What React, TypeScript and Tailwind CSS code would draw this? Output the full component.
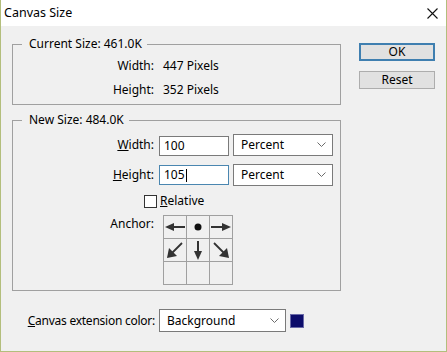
import React from "react";

const Chevron = () => (
  <svg width="9" height="6" viewBox="0 0 9 6" className="shrink-0">
    <polyline points="0.5,0.5 4.5,4.5 8.5,0.5" fill="none" stroke="#6b6b6b" strokeWidth="1" />
  </svg>
);

const Select = ({ value, className }: { value: string; className: string }) => (
  <div
    className={`flex items-center justify-between bg-white border border-[#7a7a7a] pl-[7px] pr-[6px] ${className}`}
  >
    <span>{value}</span>
    <Chevron />
  </div>
);

// anchor arrows, 22x22 drawing area per cell
const arrows: Record<string, React.ReactNode> = {
  left: (
    <>
      <line x1="21" y1="11" x2="8" y2="11" stroke="#333" strokeWidth="2" />
      <polygon points="1,11 10,7 10,15" fill="#333" />
    </>
  ),
  right: (
    <>
      <line x1="1" y1="11" x2="14" y2="11" stroke="#333" strokeWidth="2" />
      <polygon points="21,11 12,7 12,15" fill="#333" />
    </>
  ),
  dot: <circle cx="11" cy="11" r="3.5" fill="#111" />,
  down: (
    <>
      <line x1="11" y1="2" x2="11" y2="14" stroke="#333" strokeWidth="2" />
      <polygon points="11,21 7,12 15,12" fill="#333" />
    </>
  ),
  downLeft: (
    <>
      <line x1="18" y1="4" x2="8" y2="14" stroke="#333" strokeWidth="1.8" />
      <polygon points="3,19 5,9 13,17" fill="#333" />
    </>
  ),
  downRight: (
    <>
      <line x1="4" y1="4" x2="14" y2="14" stroke="#333" strokeWidth="1.8" />
      <polygon points="19,19 9,17 17,9" fill="#333" />
    </>
  ),
};

const anchorCells = ["left", "dot", "right", "downLeft", "down", "downRight", "", "", ""];

export default function App() {
  return (
    <div className="w-[447px] h-[352px] bg-[#f0f0f0] border-x border-b border-[#b3be7c] flex flex-col font-['Noto_Sans',sans-serif] text-[12px] leading-[16px] text-black">
      {/* Title bar */}
      <div className="h-[26px] bg-white flex items-center justify-between pl-[3px] pr-[8px] shrink-0">
        <span className="text-[12.5px]">Canvas Size</span>
        <svg width="11" height="11" viewBox="0 0 11 11">
          <path d="M0.5 0.5 L10.5 10.5 M10.5 0.5 L0.5 10.5" stroke="#111" strokeWidth="1.1" />
        </svg>
      </div>

      <div className="flex pl-[11px]">
        {/* Left column */}
        <div className="w-[329px] flex flex-col">
          {/* Current size */}
          <fieldset className="mt-[10px] h-[69px] border border-[#a0a0a0]">
            <legend className="ml-[9px] pl-[7px] pr-[5px]">Current Size: 461.0K</legend>
            <div className="grid grid-cols-[141px_auto] gap-x-[9px] gap-y-[8px] pt-[6px]">
              <span className="text-right">Width:</span>
              <span>447 Pixels</span>
              <span className="text-right">Height:</span>
              <span>352 Pixels</span>
            </div>
          </fieldset>

          {/* New size */}
          <fieldset className="mt-[7px] h-[179px] border border-[#a0a0a0]">
            <legend className="ml-[9px] pl-[7px] pr-[5px]">New Size: 484.0K</legend>
            <div className="flex flex-col pt-[6px]">
              <div className="flex items-center h-[22px]">
                <span className="w-[141px] text-right">
                  <span className="underline">W</span>idth:
                </span>
                <div className="ml-[5px] w-[70px] h-[20px] mt-[2px] bg-white border border-[#7a7a7a] pl-[4px] flex items-center">
                  100
                </div>
                <Select value="Percent" className="ml-[4px] w-[100px] h-[22px]" />
              </div>
              <div className="flex items-center h-[22px] mt-[8px]">
                <span className="w-[141px] text-right">
                  <span className="underline">H</span>eight:
                </span>
                <div className="ml-[5px] w-[70px] h-[20px] bg-white border border-[#4a86b0] pl-[4px] flex items-center">
                  105<span className="inline-block w-px h-[13px] bg-black ml-px" />
                </div>
                <Select value="Percent" className="ml-[4px] w-[100px] h-[22px]" />
              </div>
              <div className="flex items-center h-[16px] mt-[7px] pl-[131px]">
                <span className="w-[13px] h-[13px] bg-white border border-[#333]" />
                <span className="ml-[3px]">
                  <span className="underline">R</span>elative
                </span>
              </div>
              <div className="flex items-start mt-[6px]">
                <span className="w-[141px] text-right pt-[1px]">Anchor:</span>
                <div className="ml-[9px] grid grid-cols-[repeat(3,23px)] border-l border-t border-[#a0a0a0]">
                  {anchorCells.map((a, i) => (
                    <div key={i} className="w-[23px] h-[23px] border-r border-b border-[#a0a0a0] flex items-center justify-center">
                      {a && (
                        <svg width="22" height="22" viewBox="0 0 22 22">
                          {arrows[a]}
                        </svg>
                      )}
                    </div>
                  ))}
                </div>
              </div>
            </div>
          </fieldset>

          {/* Canvas extension color */}
          <div className="flex items-center mt-[18px]">
            <span className="w-[143px] text-right tracking-[-0.25px]">
              <span className="underline">C</span>anvas extension color:
            </span>
            <Select value="Background" className="ml-[4px] w-[127px] h-[23px]" />
            <div className="ml-[4px] w-[14px] h-[14px] bg-[#0d0d6b] border border-[#6a6aa8]" />
          </div>
        </div>

        {/* Buttons */}
        <div className="ml-[18px] pt-[17px] flex flex-col gap-[10px]">
          <button className="w-[76px] h-[18px] bg-[#e1e1e1] border-2 border-[#3f7fb0] flex items-center justify-center leading-none">
            OK
          </button>
          <button className="w-[76px] h-[18px] bg-[#e1e1e1] border border-[#adadad] flex items-center justify-center leading-none">
            Reset
          </button>
        </div>
      </div>
    </div>
  );
}
